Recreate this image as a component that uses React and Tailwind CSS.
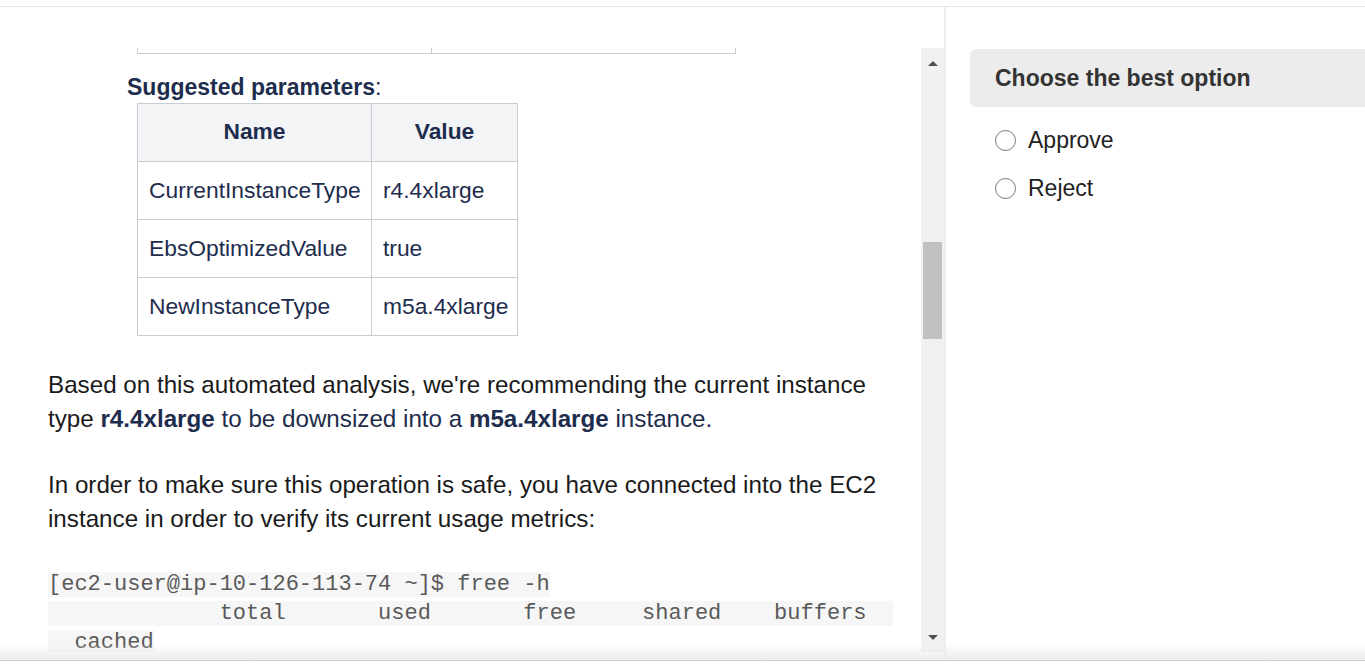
import { useState } from 'react';

const params = [
  { name: 'CurrentInstanceType', value: 'r4.4xlarge' },
  { name: 'EbsOptimizedValue', value: 'true' },
  { name: 'NewInstanceType', value: 'm5a.4xlarge' },
];

const codeLines = [
  '[ec2-user@ip-10-126-113-74 ~]$ free -h',
  '             total       used       free     shared    buffers  ',
  '  cached',
];

function Scrollbar() {
  return (
    <div className="w-[23px] h-full bg-[#f1f1f1] flex flex-col items-center">
      <div className="h-[30px] flex items-center justify-center">
        <div className="w-0 h-0 border-l-[5px] border-r-[5px] border-b-[5px] border-l-transparent border-r-transparent border-b-[#505050]" />
      </div>
      <div className="flex-1 w-full px-[2px]">
        <div className="mt-[164px] h-[97px] bg-[#c1c1c1]" />
      </div>
      <div className="h-[30px] flex items-center justify-center">
        <div className="w-0 h-0 border-l-[5px] border-r-[5px] border-t-[5px] border-l-transparent border-r-transparent border-t-[#505050]" />
      </div>
    </div>
  );
}

function Content() {
  return (
    <div className="flex-1 overflow-hidden pl-[48px] pr-[25px]">
      {/* bottom of the previous table, scrolled past */}
      <div className="ml-[89px] w-[599px] h-[6px] grid grid-cols-[294px_1fr] border-x border-b border-[#c9ccd3]">
        <div className="border-r border-[#c9ccd3]" />
        <div />
      </div>

      <div className="ml-[79px] mt-[17px]">
        <p className="text-[23px] leading-[32px] text-[#1e2d4d]">
          <span className="font-bold">Suggested parameters</span>:
        </p>
        <table className="ml-[10px] border-collapse text-[22.8px] text-[#1e2d4d]">
          <thead>
            <tr className="h-[58px] bg-[#f3f4f6]">
              <th className="border border-[#c9ccd3] w-[234px] font-bold pb-[2px]">Name</th>
              <th className="border border-[#c9ccd3] w-[146px] font-bold pb-[2px]">Value</th>
            </tr>
          </thead>
          <tbody>
            {params.map(p => (
              <tr key={p.name} className="h-[58px]">
                <td className="border border-[#c9ccd3] pl-[11px] pr-[6px] whitespace-nowrap">{p.name}</td>
                <td className="border border-[#c9ccd3] pl-[11px] pr-[6px] whitespace-nowrap">{p.value}</td>
              </tr>
            ))}
          </tbody>
        </table>
      </div>

      <p className="mt-[32px] text-[24.2px] leading-[34px] text-[#1a1a1a]">
        Based on this automated analysis, we're recommending the current instance type{' '}
        <span className="text-[#1e2d4d]">
          <b>r4.4xlarge</b> to be downsized into a <b>m5a.4xlarge</b> instance.
        </span>
      </p>

      <p className="mt-[32px] text-[24.2px] leading-[34px] text-[#1a1a1a]">
        In order to make sure this operation is safe, you have connected into the EC2 instance in order to verify its current usage metrics:
      </p>

      <pre className="mt-[34px] font-['Liberation_Mono',monospace] text-[22px] leading-[29px] text-[#5a5a5a] whitespace-pre">
        {codeLines.map((line, i) => (
          <div key={i}>
            <span className="bg-[#f6f6f6]">{line}</span>
          </div>
        ))}
      </pre>
    </div>
  );
}

function OptionsPanel() {
  const [choice, setChoice] = useState(null);
  return (
    <div className="flex-1 border-l-2 border-[#eeeeee] pl-[24px] pt-[42px]">
      <div className="h-[58px] rounded-l-[6px] bg-[#ececec] flex items-center pl-[25px]">
        <h2 className="text-[23px] font-bold text-[#333333]">Choose the best option</h2>
      </div>
      <div className="pl-[25px] pt-[19px] flex flex-col gap-[20px]">
        {['Approve', 'Reject'].map(opt => (
          <label key={opt} className="flex items-center gap-[12px] h-[28px] cursor-pointer" onClick={() => setChoice(opt)}>
            <span className="w-[21px] h-[21px] rounded-full border border-[#767676] bg-white flex items-center justify-center">
              {choice === opt && <span className="w-[11px] h-[11px] rounded-full bg-[#1e2d4d]" />}
            </span>
            <span className="text-[23px] text-[#222222]">{opt}</span>
          </label>
        ))}
      </div>
    </div>
  );
}

export default function App() {
  return (
    <div className="w-[1365px] h-[664px] bg-white overflow-hidden relative font-['Liberation_Sans',Arial,sans-serif] flex flex-col">
      <div className="h-[6px]" />
      <div className="h-[654px] border-t border-[#e6e6e6] flex relative">
        <div className="w-[944px] pt-[41px]">
          <div className="h-[604px] flex">
            <Content />
            <Scrollbar />
          </div>
        </div>
        <OptionsPanel />
        <div className="absolute left-0 right-0 bottom-0 h-[16px] bg-gradient-to-b from-transparent to-[#ececec] pointer-events-none" />
      </div>
      <div className="flex-1 border-t border-[#cfcfcf] bg-white" />
    </div>
  );
}
